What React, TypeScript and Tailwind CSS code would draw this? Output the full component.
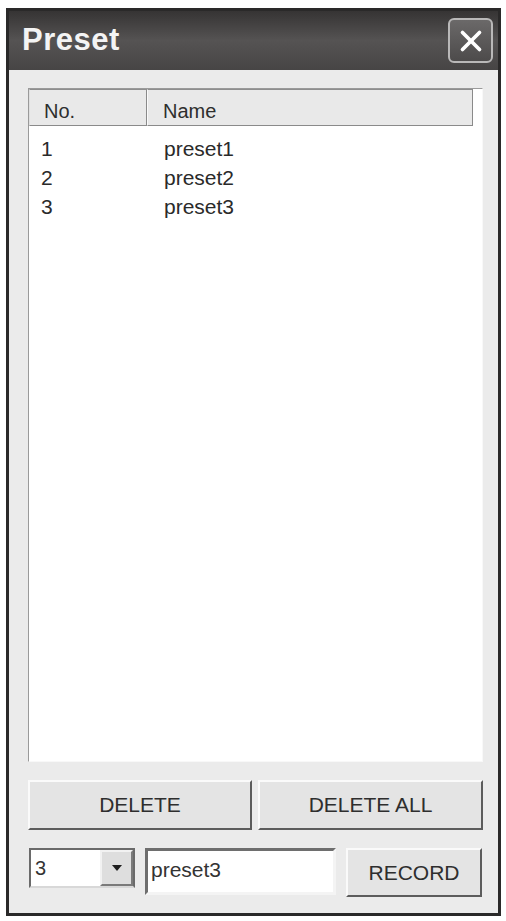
import { X } from "lucide-react";

const rows = [
  { no: "1", name: "preset1" },
  { no: "2", name: "preset2" },
  { no: "3", name: "preset3" },
];

// raised win-classic style button
function Btn({ label, className }: { label: string; className: string }) {
  return (
    <button
      className={`flex items-center justify-center border-2 border-t-[#fafafa] border-l-[#fafafa] border-b-[#5c5c5c] border-r-[#5c5c5c] bg-[#e4e4e4] text-[21px] text-[#2e2e2e] ${className}`}
    >
      {label}
    </button>
  );
}

export default function App() {
  return (
    <div
      className="h-[921px] w-[506px] bg-white pt-[8px] pl-[6px]"
      style={{ fontFamily: '"Liberation Sans", Arial, sans-serif' }}
    >
      <div className="flex h-[908px] w-[495px] flex-col border-[3px] border-[#2a2929] bg-[#ebebeb]">
        {/* Title bar */}
        <div className="flex h-[59px] shrink-0 items-center justify-between bg-gradient-to-b from-[#363434] via-[#555353] to-[#474545] pl-[13px] pr-[5px]">
          <span className="text-[31px] font-bold tracking-[0.5px] text-[#f4f4f4]">Preset</span>
          <div className="flex h-[45px] w-[45px] items-center justify-center rounded-[6px] border-2 border-[#b9b8b8] bg-gradient-to-b from-[#6b6969] to-[#4d4b4b]">
            <X className="size-[34px] text-white" strokeWidth={2.6} />
          </div>
        </div>

        {/* Client area */}
        <div className="flex flex-1 flex-col pl-[19px] pr-[15px] pt-[18px] pb-[16px]">
          {/* List view */}
          <div className="flex h-[674px] flex-col border border-t-[#9a9a9a] border-l-[#9a9a9a] border-b-[#f8f8f8] border-r-[#f8f8f8] bg-white">
            <div className="flex h-[37px] shrink-0 bg-white text-[20px] text-[#2e2e2e]">
              <div className="w-[118px] border border-t-[#8e8e8e] border-l-[#e0e0e0] border-b-[#8a8a8a] border-r-[#8a8a8a] bg-[#e9e9e9] pl-[14px] pt-[11px] leading-[20px]">
                No.
              </div>
              <div className="w-[326px] border border-t-[#8e8e8e] border-l-[#fafafa] border-b-[#8a8a8a] border-r-[#8a8a8a] bg-[#e9e9e9] pl-[15px] pt-[11px] leading-[20px]">
                Name
              </div>
            </div>
            <div className="pt-[8px] text-[21px] leading-[29px] text-[#2a2a2a]">
              {rows.map((r) => (
                <div key={r.no} className="flex">
                  <span className="w-[119px] pl-[12px]">{r.no}</span>
                  <span className="pl-[16px]">{r.name}</span>
                </div>
              ))}
            </div>
          </div>

          {/* Delete buttons */}
          <div className="mt-[18px] flex h-[50px] gap-[6px]">
            <Btn label="DELETE" className="w-[224px]" />
            <Btn label="DELETE ALL" className="w-[225px]" />
          </div>

          {/* Record row */}
          <div className="mt-[18px] flex h-[49px] items-start">
            <div className="ml-[1px] flex h-[40px] w-[106px] border-2 border-t-[#6a6a6a] border-l-[#6a6a6a] border-b-[#d8d8d8] border-r-[#6a6a6a] bg-white">
              <span className="flex-1 pl-[4px] text-[20px] leading-[36px] text-[#333]">3</span>
              <div className="flex h-[36px] w-[33px] items-center justify-center border-2 border-t-[#f2f2f2] border-l-[#f2f2f2] border-b-[#7a7a7a] border-r-[#7a7a7a] bg-[#dedede]">
                <svg width="10" height="6" viewBox="0 0 10 6">
                  <path d="M0 0h10L5 6z" fill="#1e1e1e" />
                </svg>
              </div>
            </div>
            <div className="ml-[10px] h-[47px] w-[191px] border-[3px] border-t-[#6e6e6e] border-l-[#6e6e6e] border-b-[#f4f4f4] border-r-[#f4f4f4] bg-white pl-[3px] pt-[7px] text-[21px] leading-[24px] text-[#333]">
              preset3
            </div>
            <Btn label="RECORD" className="ml-[10px] h-[49px] w-[136px]" />
          </div>
        </div>
      </div>
    </div>
  );
}
